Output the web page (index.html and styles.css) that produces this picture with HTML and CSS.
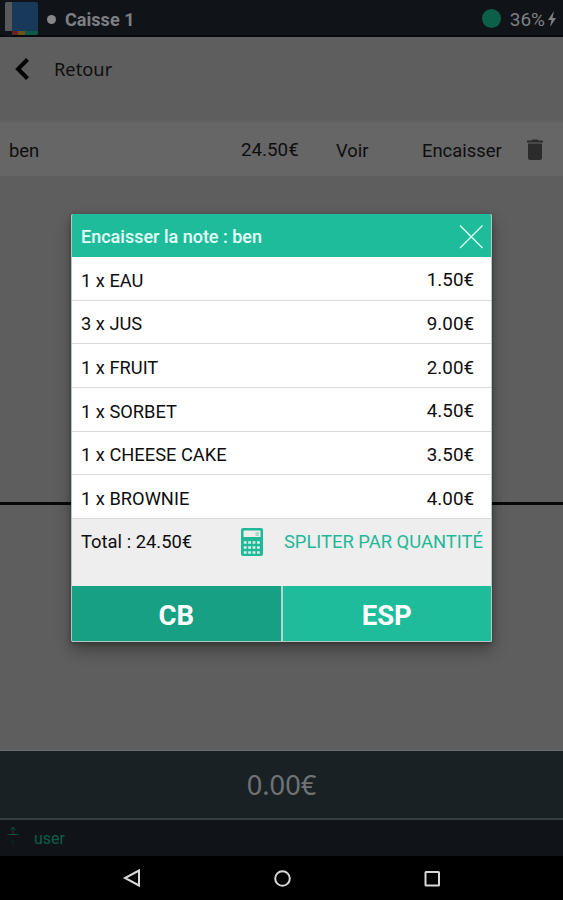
FILE: index.html
```html
<!doctype html>
<html lang="fr">
<head>
    <meta charset="utf-8">
    <meta name="viewport" content="width=device-width, initial-scale=1">
    <title>Caisse 1</title>
    <link rel="stylesheet" href="styles.css">
</head>
<body>
    <header class="topbar">
        <svg class="logo" width="34" height="34" viewBox="0 0 34 34">
            <rect width="33" height="33" rx="2" fill="#18395a"/>
            <path d="M2 0h5v30H2a2 2 0 0 1-2-2V2a2 2 0 0 1 2-2z" fill="#59595a"/>
            <path d="M0 29h7v5H0z" fill="#101419"/>
            <path d="M7 29h6v4H7z" fill="#64241f"/>
            <path d="M13 29h7v4h-7z" fill="#70501d"/>
            <path d="M20 29h13v2a2 2 0 0 1-2 2H20z" fill="#0c5b46"/>
        </svg>
        <span class="dot"></span>
        <span class="title">Caisse 1</span>
        <span class="status"></span>
        <span class="battery">36%</span>
        <svg class="bolt" width="8" height="16" viewBox="0 0 8 16">
            <path d="M6 0L0 9h3.500L2 16l6-9H4.500z" fill="#7d7f82"/>
        </svg>
    </header>

    <main>
        <div class="back">
            <svg width="16" height="24" viewBox="0 0 16 24">
                <path d="M13.500 2.500L4 12l9.500 9.500" fill="none" stroke="#000" stroke-width="4"/>
            </svg>
            <span>Retour</span>
        </div>
        <div class="note">
            <span class="note-name">ben</span>
            <span class="note-price">24.50€</span>
            <span class="note-view">Voir</span>
            <span class="note-pay">Encaisser</span>
            <svg width="16" height="22" viewBox="0 0 16 22">
                <path d="M0 1.500h4.500L5.500 0.500h5l1 1H16v2H0zM1 4.500h14V19a2 2 0 0 1-2 2H3a2 2 0 0 1-2-2z" fill="#2b2b2b"/>
            </svg>
        </div>
        <div class="list"></div>
    </main>

    <div class="amount">0.00€</div>
    <div class="userbar">
        <svg width="12" height="22" viewBox="0 0 12 22" fill="none" stroke="#0d4a3c">
            <path d="M0.500 9.500h11M6 9V2M3.500 5L6 2l2.500 3"/>
            <path d="M6 15v5M4 18l2-2.500" stroke="#102426"/>
        </svg>
        <span>user</span>
    </div>
    <nav class="navbar">
        <svg width="20" height="20" viewBox="0 0 20 20"><path d="M17 2.500v15L3 10z"/></svg>
        <svg width="20" height="20" viewBox="0 0 20 20"><circle cx="10.500" cy="10.500" r="7.300"/></svg>
        <svg width="20" height="20" viewBox="0 0 20 20"><rect x="3.500" y="4" width="13.500" height="13.500" rx="0.500"/></svg>
    </nav>

    <div class="overlay">
        <div class="modal">
            <div class="modal-header">
                <span>Encaisser la note : ben</span>
                <svg width="24" height="24" viewBox="0 0 24 24">
                    <path d="M1 0.500l22.500 22.500M23.500 0.500L1 23" stroke="#e3fff8" stroke-width="1.300"/>
                </svg>
            </div>
            <ul class="items">
                <li><span>1 x EAU</span><span class="price">1.50€</span></li>
                <li><span>3 x JUS</span><span class="price">9.00€</span></li>
                <li><span>1 x FRUIT</span><span class="price">2.00€</span></li>
                <li><span>1 x SORBET</span><span class="price">4.50€</span></li>
                <li><span>1 x CHEESE CAKE</span><span class="price">3.50€</span></li>
                <li><span>1 x BROWNIE</span><span class="price">4.00€</span></li>
            </ul>
            <div class="total">
                <span class="total-text">Total : 24.50€</span>
                <svg width="22" height="28" viewBox="0 0 22 28">
                    <rect width="22" height="28" rx="2" fill="#1fb998"/>
                    <rect x="2.500" y="2.500" width="17" height="6.500" rx="0.500" fill="#eee"/>
                    <path d="M14.500 4h3.500v4h-3.500z" fill="#a9dacd"/>
                    <path d="M2.800 14.500h17M2.800 19.500h17M2.800 24.500h17" stroke="#d9f1eb" stroke-width="2.500" stroke-dasharray="2.800 1.600"/>
                </svg>
                <span class="split">SPLITER PAR QUANTITÉ</span>
            </div>
            <div class="buttons">
                <button class="cb">CB</button>
                <button class="esp">ESP</button>
            </div>
        </div>
    </div>
</body>
</html>
```

FILE: styles.css
```css
* {
    box-sizing: border-box;
}
body {
    font-family: Roboto, sans-serif;
    font-size: 18.4px;
    color: #0e0e0e;
    background-color: #5e5e5e;
    display: flex;
    flex-direction: column;
    height: 900px;
    margin: 0;
    overflow: hidden;
}
svg {
    display: block;
    flex: none;
}
.topbar {
    display: flex;
    align-items: center;
    height: 37px;
    padding: 0 7px 0 5px;
    background-color: #101419;
    border-bottom: 2px solid #07090c;
    color: #7d7f82;
}
.logo {
    margin-top: 3px;
}
.dot {
    width: 9px;
    height: 9px;
    margin: 3px 9px 0 8px;
    border-radius: 50%;
    background-color: #85878a;
}
.title {
    padding-top: 4px;
    font-size: 18.1px;
    font-weight: bold;
}
.status {
    width: 19px;
    height: 19px;
    margin: 2px 9px 0 auto;
    border-radius: 50%;
    background-color: #0c6049;
}
.battery {
    padding-top: 3px;
    font-size: 19px;
}
.bolt {
    margin: 2px 0 0 3px;
}
main {
    flex: 1;
    display: flex;
    flex-direction: column;
    border-bottom: 1px solid #6a6c6d;
}
.back {
    display: flex;
    align-items: center;
    gap: 24px;
    height: 85px;
    padding: 0 0 21px 14px;
    font-family: "Noto Sans", sans-serif;
    font-size: 18.3px;
}
.back span {
    padding-bottom: 2px;
}
.note {
    display: flex;
    align-items: center;
    height: 54px;
    padding: 2px 0 0 9px;
    background-color: #666;
}
.note-name {
    width: 232px;
}
.note-price {
    width: 95px;
    font-size: 18.8px;
}
.note-view {
    width: 86px;
}
.note-pay {
    width: 105px;
}
.list {
    height: 329px;
    border-bottom: 3px solid #080808;
}
.amount {
    height: 69px;
    background-color: #1a2125;
    border-bottom: 2px solid #373d42;
    color: #707376;
    font-family: "Noto Sans", sans-serif;
    font-size: 27.2px;
    line-height: 67px;
    text-align: center;
}
.userbar {
    display: flex;
    gap: 15px;
    height: 36px;
    padding: 5px 0 0 7px;
    background-color: #101318;
    color: #0d5f49;
    font-size: 16px;
    line-height: 28px;
}
.navbar {
    display: flex;
    justify-content: center;
    gap: 130px;
    height: 44px;
    padding-top: 12px;
    background-color: #000;
}
.navbar svg {
    fill: none;
    stroke: #d8d8d8;
    stroke-width: 2;
}
.overlay {
    position: absolute;
    top: 0;
    left: 0;
    width: 563px;
    height: 900px;
    padding: 214px 71px 0;
}
.modal {
    border: 1px solid #b2c8c2;
    border-top: none;
    border-radius: 2px;
    overflow: hidden;
    background-color: #fff;
    box-shadow: 0 8px 16px rgba(0, 0, 0, 0.32), 0 1px 4px rgba(0, 0, 0, 0.3);
}
.modal-header {
    display: flex;
    justify-content: space-between;
    align-items: center;
    height: 43px;
    padding: 2px 8px 0 9px;
    background-color: #1fbc9c;
    color: #e5fff9;
    font-size: 18px;
    font-weight: 500;
}
.items {
    list-style: none;
    margin: 0;
    padding: 0;
}
.items li {
    display: flex;
    justify-content: space-between;
    align-items: center;
    height: 43.65px;
    padding: 4px 17px 0 9px;
    border-bottom: 1px solid #dadada;
    font-size: 18.3px;
}
.price {
    font-size: 18.8px;
}
.total {
    display: flex;
    align-items: flex-start;
    height: 67px;
    padding: 9px 8px 0 9px;
    background-color: #eee;
    line-height: 28px;
}
.total-text {
    width: 160px;
}
.split {
    margin-left: auto;
    color: #1fb998;
    white-space: nowrap;
}
.buttons {
    display: flex;
    gap: 2px;
    height: 55px;
    background-color: #b5d9d0;
}
button {
    flex: 1;
    padding: 4px 0 0;
    border: none;
    color: #fff;
    font-family: Roboto, sans-serif;
    font-size: 27.5px;
    font-weight: bold;
}
.cb {
    background-color: #18a085;
}
.esp {
    background-color: #1fbc9c;
}
```
